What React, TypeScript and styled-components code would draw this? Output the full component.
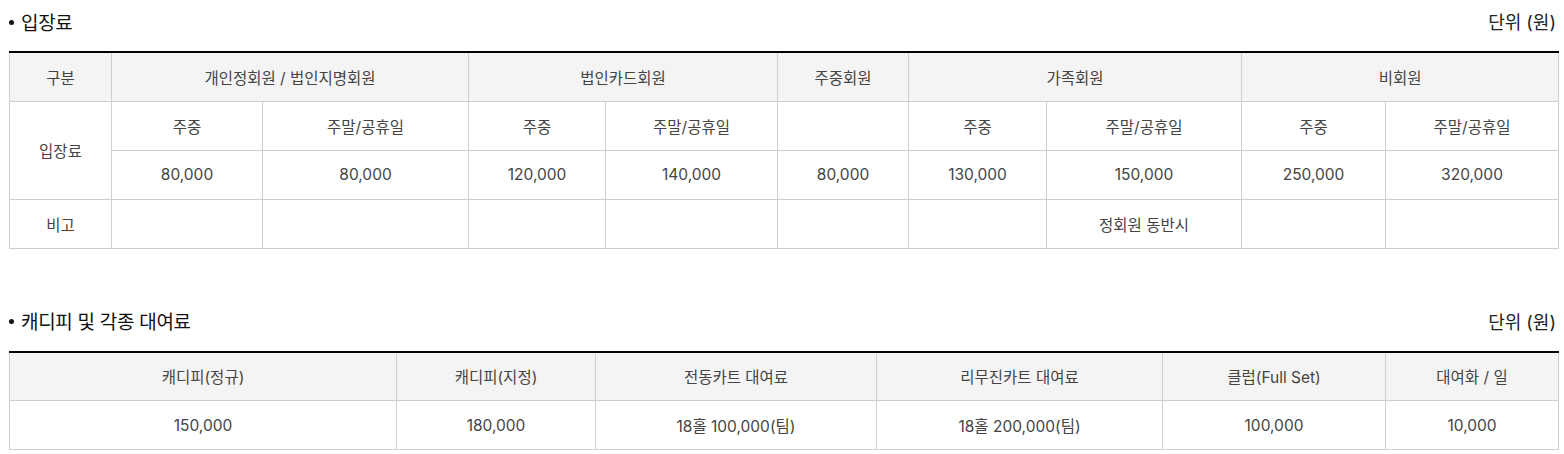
import React from "react";
import styled, { createGlobalStyle } from "styled-components";

const Global = createGlobalStyle`
  html, body { margin: 0; padding: 0; background: #fff; }
  body { font-family: Inter, "Noto Sans CJK KR", "Noto Sans", sans-serif; color: #333; }
`;

const Page = styled.div`
  padding: 8px 6px 0 9px;
  display: flex;
  flex-direction: column;
`;

const Section = styled.section<{ $gap?: number }>`
  display: flex;
  flex-direction: column;
  margin-top: ${(p) => p.$gap ?? 0}px;
`;

const TitleRow = styled.div`
  display: flex;
  justify-content: space-between;
  align-items: center;
  height: 26px;
  margin-bottom: 17px;
`;

const Title = styled.h3`
  margin: 0;
  font-size: 19px;
  font-weight: 400;
  color: #111;
  letter-spacing: -0.3px;
  display: flex;
  align-items: center;
  gap: 7px;
`;

const Bullet = styled.span`
  width: 5px;
  height: 5px;
  border-radius: 50%;
  background: #111;
  margin-top: 2px;
`;

const Unit = styled.span`
  font-size: 18px;
  color: #222;
  padding-right: 2px;
`;

const Table = styled.table`
  width: 100%;
  border-collapse: collapse;
  table-layout: fixed;
  border-top: 2px solid #000;
`;

const Cell = styled.td<{ $head?: boolean }>`
  height: 49px;
  padding: 0;
  box-sizing: border-box;
  border: 1px solid #cfcfcf;
  text-align: center;
  vertical-align: middle;
  font-size: 15.5px;
  color: #444;
  background: ${(p) => (p.$head ? "#f4f4f4" : "#fff")};
  letter-spacing: 0;
`;

const cols1 = [102, 151, 206, 137, 172, 131, 138, 195, 144, 173];
const cols2 = [387, 199, 281, 286, 223, 173];

export default function App() {
  return (
    <Page>
      <Global />
      <Section>
        <TitleRow>
          <Title>
            <Bullet />
            입장료
          </Title>
          <Unit>단위 (원)</Unit>
        </TitleRow>
        <Table>
          <colgroup>
            {cols1.map((w, i) => (
              <col key={i} style={{ width: w }} />
            ))}
          </colgroup>
          <tbody>
            <tr>
              <Cell $head>구분</Cell>
              <Cell $head colSpan={2}>개인정회원 / 법인지명회원</Cell>
              <Cell $head colSpan={2}>법인카드회원</Cell>
              <Cell $head>주중회원</Cell>
              <Cell $head colSpan={2}>가족회원</Cell>
              <Cell $head colSpan={2}>비회원</Cell>
            </tr>
            <tr>
              <Cell rowSpan={2}>입장료</Cell>
              <Cell>주중</Cell>
              <Cell>주말/공휴일</Cell>
              <Cell>주중</Cell>
              <Cell>주말/공휴일</Cell>
              <Cell></Cell>
              <Cell>주중</Cell>
              <Cell>주말/공휴일</Cell>
              <Cell>주중</Cell>
              <Cell>주말/공휴일</Cell>
            </tr>
            <tr>
              <Cell>80,000</Cell>
              <Cell>80,000</Cell>
              <Cell>120,000</Cell>
              <Cell>140,000</Cell>
              <Cell>80,000</Cell>
              <Cell>130,000</Cell>
              <Cell>150,000</Cell>
              <Cell>250,000</Cell>
              <Cell>320,000</Cell>
            </tr>
            <tr>
              <Cell>비고</Cell>
              <Cell></Cell>
              <Cell></Cell>
              <Cell></Cell>
              <Cell></Cell>
              <Cell></Cell>
              <Cell></Cell>
              <Cell>정회원 동반시</Cell>
              <Cell></Cell>
              <Cell></Cell>
            </tr>
          </tbody>
        </Table>
      </Section>
      <Section $gap={59}>
        <TitleRow>
          <Title>
            <Bullet />
            캐디피 및 각종 대여료
          </Title>
          <Unit>단위 (원)</Unit>
        </TitleRow>
        <Table>
          <colgroup>
            {cols2.map((w, i) => (
              <col key={i} style={{ width: w }} />
            ))}
          </colgroup>
          <tbody>
            <tr>
              <Cell $head>캐디피(정규)</Cell>
              <Cell $head>캐디피(지정)</Cell>
              <Cell $head>전동카트 대여료</Cell>
              <Cell $head>리무진카트 대여료</Cell>
              <Cell $head>클럽(Full Set)</Cell>
              <Cell $head>대여화 / 일</Cell>
            </tr>
            <tr>
              <Cell>150,000</Cell>
              <Cell>180,000</Cell>
              <Cell>18홀 100,000(팀)</Cell>
              <Cell>18홀 200,000(팀)</Cell>
              <Cell>100,000</Cell>
              <Cell>10,000</Cell>
            </tr>
          </tbody>
        </Table>
      </Section>
    </Page>
  );
}
